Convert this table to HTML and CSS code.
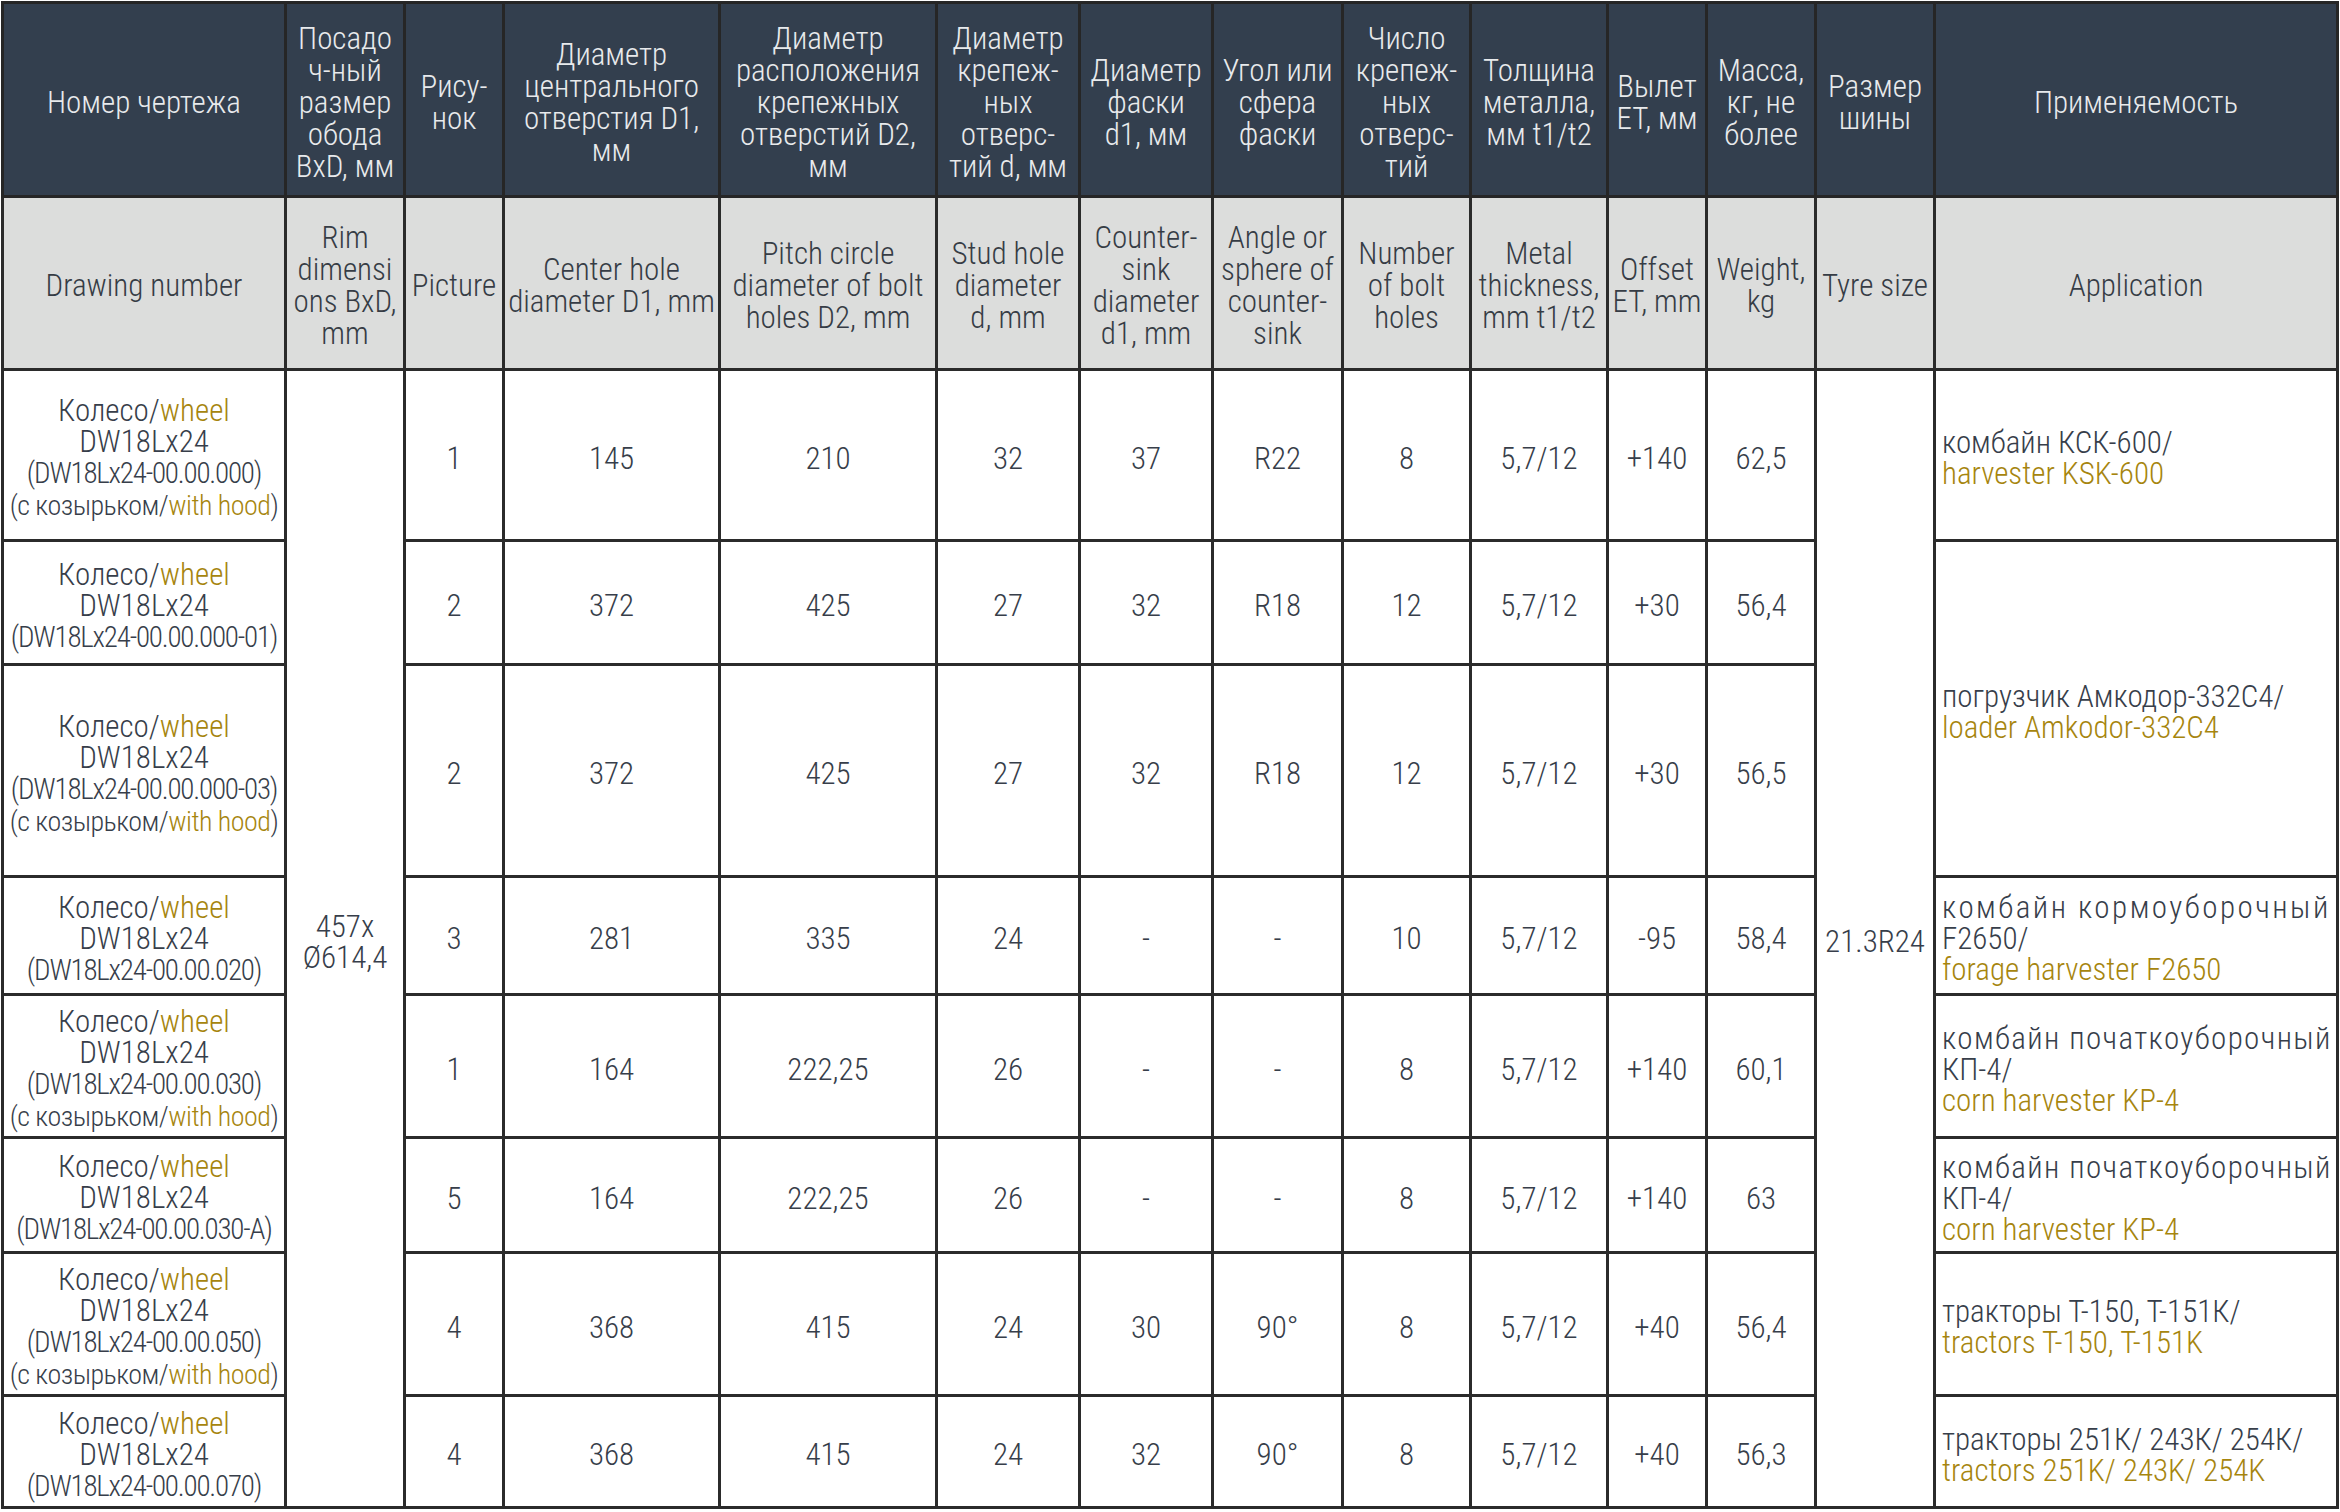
FILE: index.html
```html
<!DOCTYPE html>
<html lang="ru">
<head>
<meta charset="utf-8">
<title>DW18Lx24</title>
<link rel="stylesheet" href="styles.css">
</head>
<body>
<table class="spec">
  <colgroup>
    <col class="c1"><col class="c2"><col class="c3"><col class="c4"><col class="c5"><col class="c6"><col class="c7">
    <col class="c8"><col class="c9"><col class="c10"><col class="c11"><col class="c12"><col class="c13"><col class="c14">
  </colgroup>
  <thead>
    <tr class="hru">
      <th>Номер чертежа</th>
      <th>Посадо<br>ч-ный<br>размер<br>обода<br>BxD, мм</th>
      <th>Рису-<br>нок</th>
      <th>Диаметр<br>центрального<br>отверстия D1,<br>мм</th>
      <th>Диаметр<br>расположения<br>крепежных<br>отверстий D2,<br>мм</th>
      <th>Диаметр<br>крепеж-<br>ных<br>отверс-<br>тий d, мм</th>
      <th>Диаметр<br>фаски<br>d1, мм</th>
      <th>Угол или<br>сфера<br>фаски</th>
      <th>Число<br>крепеж-<br>ных<br>отверс-<br>тий</th>
      <th>Толщина<br>металла,<br>мм t1/t2</th>
      <th>Вылет<br>ET, мм</th>
      <th>Масса,<br>кг, не<br>более</th>
      <th>Размер<br>шины</th>
      <th>Применяемость</th>
    </tr>
    <tr class="hen">
      <th>Drawing number</th>
      <th>Rim<br>dimensi<br>ons BxD,<br>mm</th>
      <th>Picture</th>
      <th>Center hole<br>diameter D1, mm</th>
      <th>Pitch circle<br>diameter of bolt<br>holes D2, mm</th>
      <th>Stud hole<br>diameter<br>d, mm</th>
      <th>Counter-<br>sink<br>diameter<br>d1, mm</th>
      <th>Angle or<br>sphere of<br>counter-<br>sink</th>
      <th>Number<br>of bolt<br>holes</th>
      <th>Metal<br>thickness,<br>mm t1/t2</th>
      <th>Offset<br>ET, mm</th>
      <th>Weight,<br>kg</th>
      <th>Tyre size</th>
      <th>Application</th>
    </tr>
  </thead>
  <tbody>
    <tr class="r1">
      <td class="name">Колесо/<span class="gold">wheel</span><br>DW18Lx24<br><span class="code">(DW18Lx24-00.00.000)</span><br><span class="hood">(с козырьком/<span class="gold">with hood</span>)</span></td>
      <td rowspan="8">457x<br>Ø614,4</td>
      <td>1</td><td>145</td><td>210</td><td>32</td><td>37</td><td>R22</td><td>8</td><td>5,7/12</td><td>+140</td><td>62,5</td>
      <td rowspan="8">21.3R24</td>
      <td class="app">комбайн КСК-600/<br><span class="gold">harvester KSK-600</span></td>
    </tr>
    <tr class="r2">
      <td class="name">Колесо/<span class="gold">wheel</span><br>DW18Lx24<br><span class="code">(DW18Lx24-00.00.000-01)</span></td>
      <td>2</td><td>372</td><td>425</td><td>27</td><td>32</td><td>R18</td><td>12</td><td>5,7/12</td><td>+30</td><td>56,4</td>
      <td class="app" rowspan="2">погрузчик Амкодор-332С4/<br><span class="gold">loader Amkodor-332C4</span></td>
    </tr>
    <tr class="r3">
      <td class="name">Колесо/<span class="gold">wheel</span><br>DW18Lx24<br><span class="code">(DW18Lx24-00.00.000-03)</span><br><span class="hood">(с козырьком/<span class="gold">with hood</span>)</span></td>
      <td>2</td><td>372</td><td>425</td><td>27</td><td>32</td><td>R18</td><td>12</td><td>5,7/12</td><td>+30</td><td>56,5</td>
    </tr>
    <tr class="r4">
      <td class="name">Колесо/<span class="gold">wheel</span><br>DW18Lx24<br><span class="code">(DW18Lx24-00.00.020)</span></td>
      <td>3</td><td>281</td><td>335</td><td>24</td><td>-</td><td>-</td><td>10</td><td>5,7/12</td><td>-95</td><td>58,4</td>
      <td class="app"><span class="just">комбайн кормоуборочный</span>F2650/<br><span class="gold">forage harvester F2650</span></td>
    </tr>
    <tr class="r5">
      <td class="name">Колесо/<span class="gold">wheel</span><br>DW18Lx24<br><span class="code">(DW18Lx24-00.00.030)</span><br><span class="hood">(с козырьком/<span class="gold">with hood</span>)</span></td>
      <td>1</td><td>164</td><td>222,25</td><td>26</td><td>-</td><td>-</td><td>8</td><td>5,7/12</td><td>+140</td><td>60,1</td>
      <td class="app"><span class="just tight">комбайн початкоуборочный</span>КП-4/<br><span class="gold">corn harvester KP-4</span></td>
    </tr>
    <tr class="r6">
      <td class="name">Колесо/<span class="gold">wheel</span><br>DW18Lx24<br><span class="code">(DW18Lx24-00.00.030-A)</span></td>
      <td>5</td><td>164</td><td>222,25</td><td>26</td><td>-</td><td>-</td><td>8</td><td>5,7/12</td><td>+140</td><td>63</td>
      <td class="app"><span class="just tight">комбайн початкоуборочный</span>КП-4/<br><span class="gold">corn harvester KP-4</span></td>
    </tr>
    <tr class="r7">
      <td class="name">Колесо/<span class="gold">wheel</span><br>DW18Lx24<br><span class="code">(DW18Lx24-00.00.050)</span><br><span class="hood">(с козырьком/<span class="gold">with hood</span>)</span></td>
      <td>4</td><td>368</td><td>415</td><td>24</td><td>30</td><td>90°</td><td>8</td><td>5,7/12</td><td>+40</td><td>56,4</td>
      <td class="app">тракторы Т-150, Т-151К/<br><span class="gold">tractors T-150, T-151K</span></td>
    </tr>
    <tr class="r8">
      <td class="name">Колесо/<span class="gold">wheel</span><br>DW18Lx24<br><span class="code">(DW18Lx24-00.00.070)</span></td>
      <td>4</td><td>368</td><td>415</td><td>24</td><td>32</td><td>90°</td><td>8</td><td>5,7/12</td><td>+40</td><td>56,3</td>
      <td class="app">тракторы 251К/ 243К/ 254К/<br><span class="gold">tractors 251K/ 243K/ 254K</span></td>
    </tr>
  </tbody>
</table>
</body>
</html>
```
FILE: styles.css
```css
html, body {
  margin: 0;
  padding: 0;
  background: #ffffff;
}

.spec {
  border-collapse: collapse;
  table-layout: fixed;
  width: 2335px;
  margin: 1px 0 0 1px;
  font-family: "Roboto Condensed", "Open Sans", sans-serif;
  font-weight: 300;
  font-size: 31px;
  line-height: 31px;
  color: #373e4a;
}

.c1 { width: 283px; }
.c2 { width: 119px; }
.c3 { width: 99px; }
.c4 { width: 216px; }
.c5 { width: 217px; }
.c6 { width: 143px; }
.c7 { width: 133px; }
.c8 { width: 130px; }
.c9 { width: 128px; }
.c10 { width: 137px; }
.c11 { width: 99px; }
.c12 { width: 109px; }
.c13 { width: 119px; }
.c14 { width: 403px; }

.spec th,
.spec td {
  border: 3px solid #2b2b2b;
  padding: 6px 0 0;
  text-align: center;
  vertical-align: middle;
  font-weight: 300;
  white-space: nowrap;
}

.hru {
  height: 194px;
}
.hru th {
  background: #333f4e;
  color: #e8eaec;
  line-height: 32px;
  border-color: #262626;
}

.hen {
  height: 173px;
}
.hen th {
  background: #dcdddc;
  color: #363c45;
  line-height: 32px;
}

.r1 { height: 171px; }
.r2 { height: 124px; }
.r3 { height: 212px; }
.r4 { height: 118px; }
.r5 { height: 143px; }
.r6 { height: 115px; }
.r7 { height: 143px; }
.r8 { height: 112px; }

.gold {
  color: #a6850e;
}

.code {
  font-size: 29px;
  letter-spacing: -1.2px;
}

.hood {
  font-size: 28px;
  letter-spacing: -0.5px;
}

.spec td.app {
  text-align: left;
  padding: 6px 6px 0 6px;
}

.just {
  display: block;
  text-align: justify;
  text-align-last: justify;
  letter-spacing: 2.5px;
}

.just.tight {
  letter-spacing: 1.4px;
}
```
